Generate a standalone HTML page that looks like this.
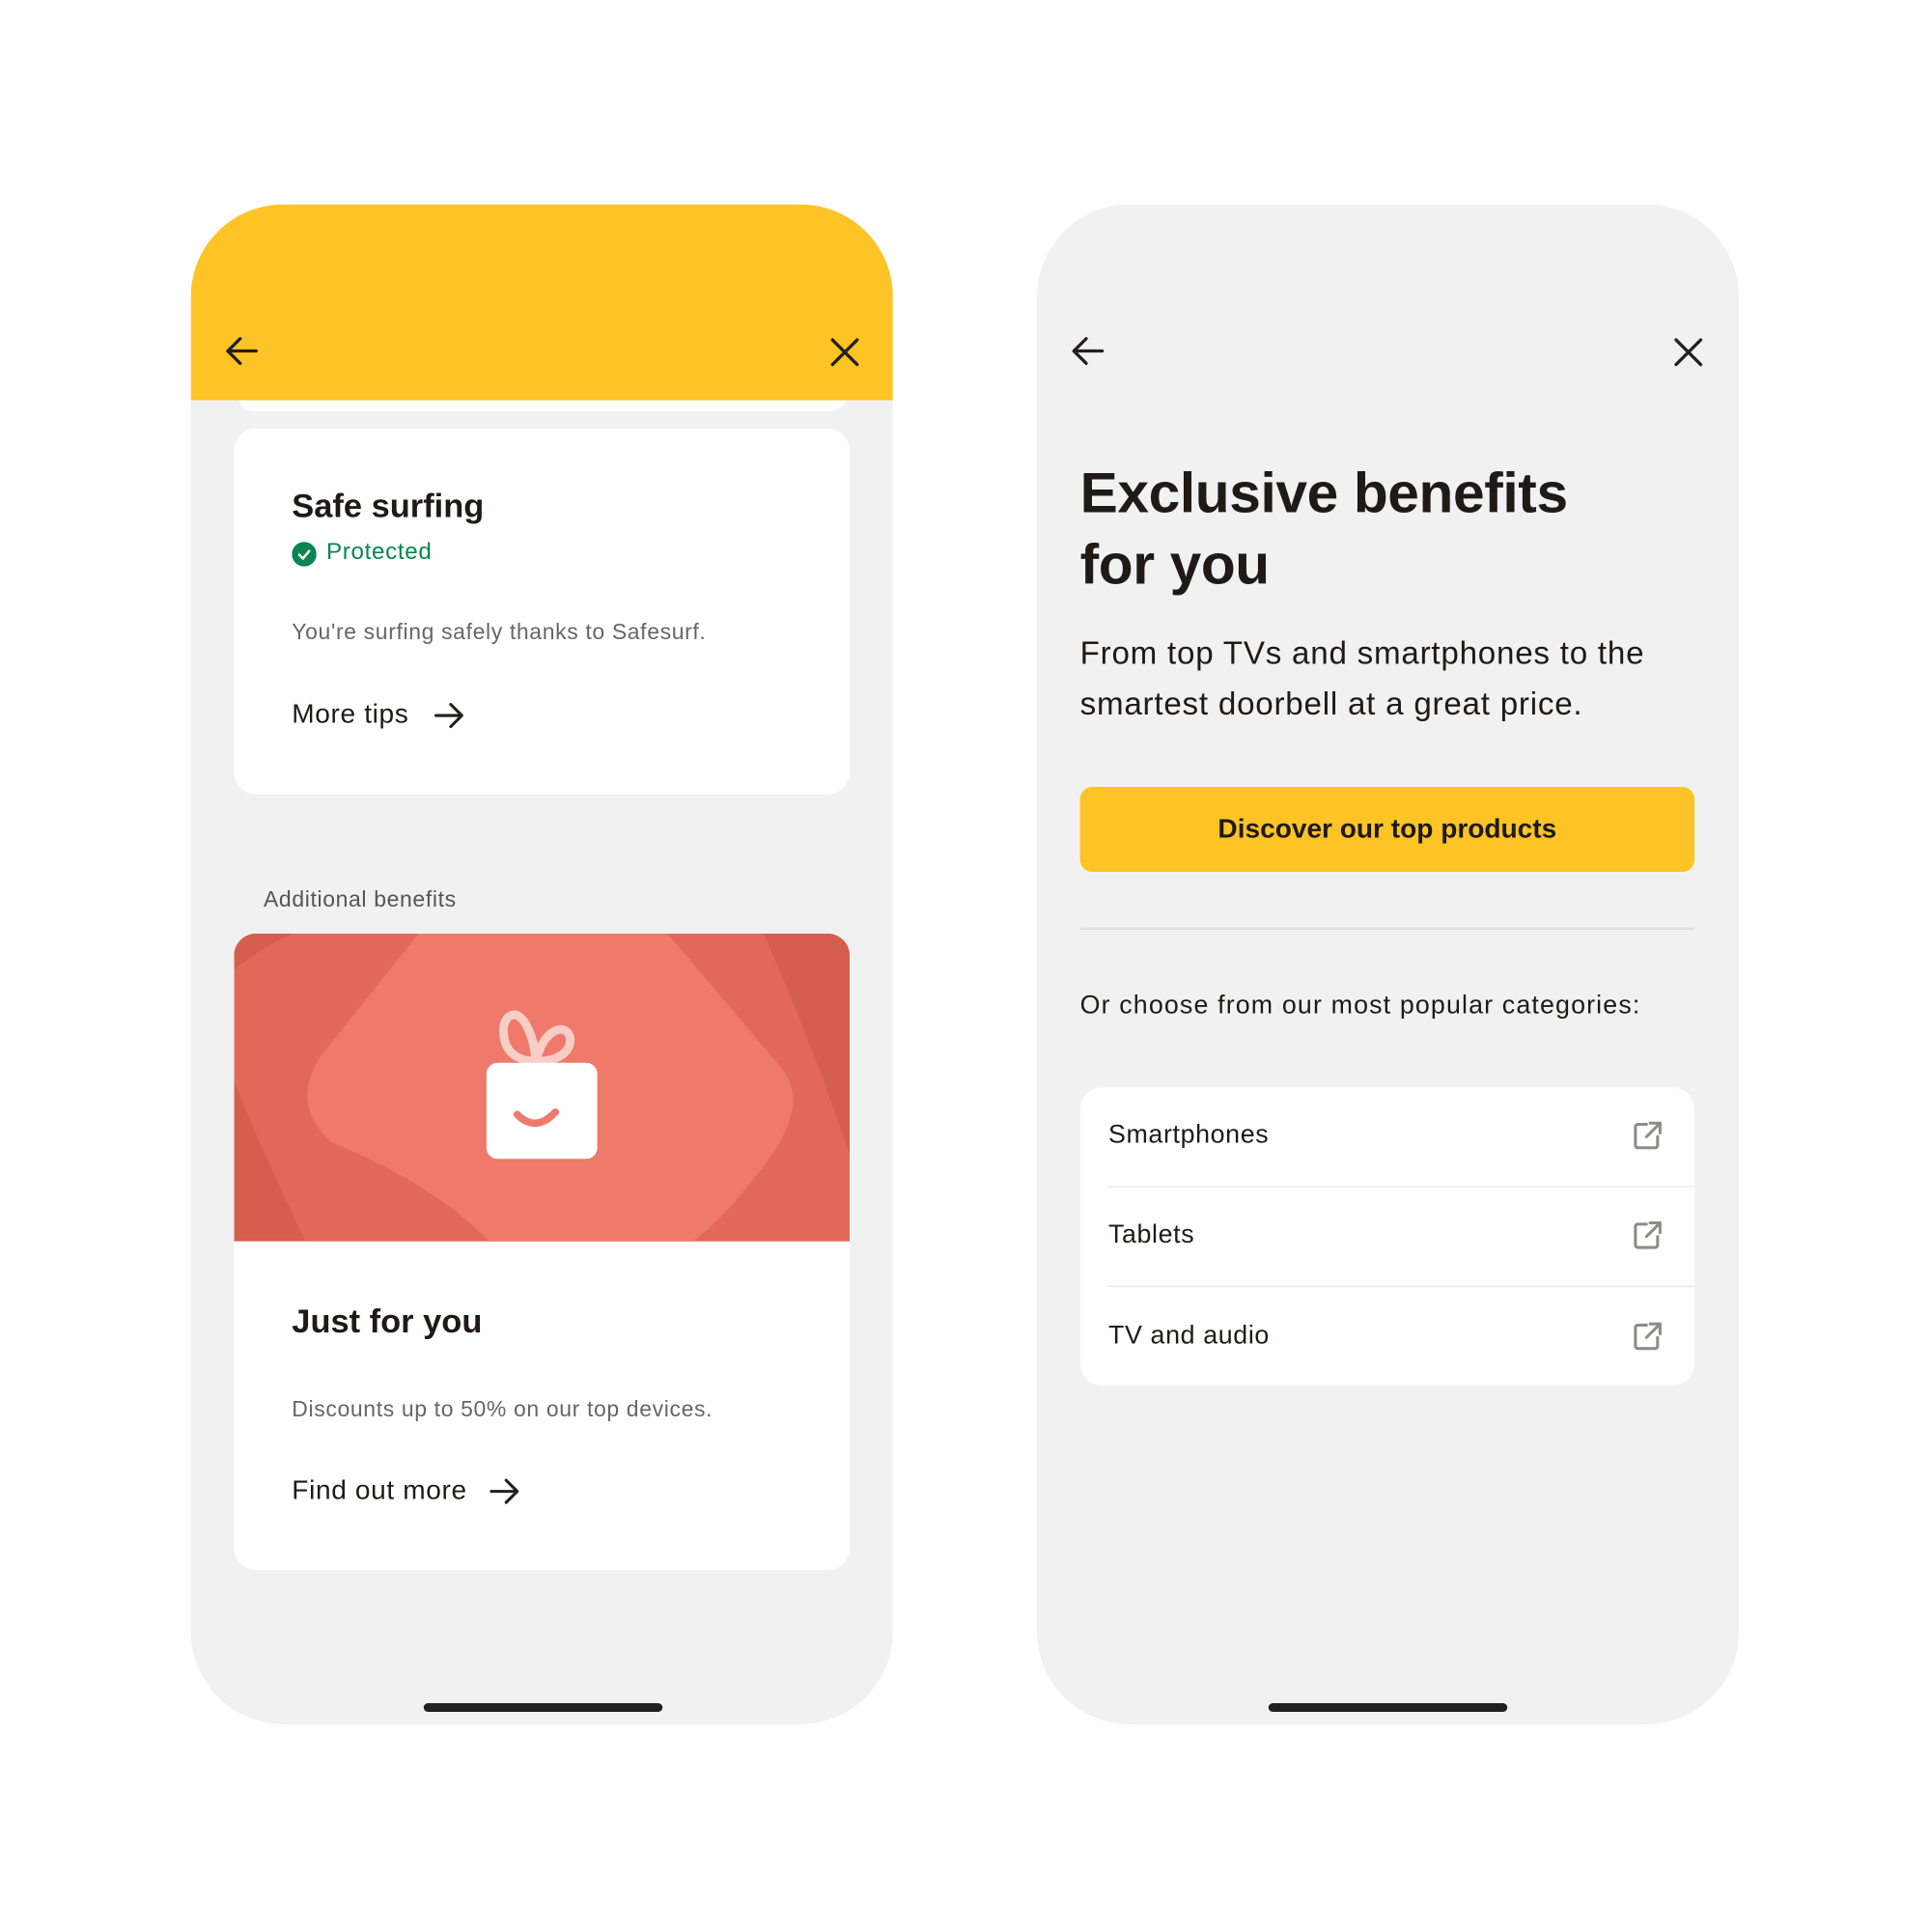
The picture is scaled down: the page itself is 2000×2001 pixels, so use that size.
<!DOCTYPE html>
<html><head><meta charset="utf-8"><style>
html,body{margin:0;padding:0;background:#fff;}
body{width:2000px;height:2001px;overflow:hidden;font-family:"Liberation Sans",sans-serif;color:#1f1a17;}
#s{position:absolute;left:0;top:0;width:1568px;height:1569px;transform:scale(1.2755);transform-origin:0 0;}
.abs{position:absolute;}
.phone{position:absolute;top:166px;width:570px;height:1234px;background:#f1f1f1;border-radius:75px;overflow:hidden;}
.card{position:absolute;background:#fff;border-radius:18px;}
.t{position:absolute;white-space:nowrap;line-height:1;letter-spacing:0.5px;}
.home{position:absolute;width:194px;height:7px;border-radius:4px;background:#231f1d;}
</style></head><body><div id="s">

<!-- Phone 1 -->
<div class="phone" style="left:155px;">
  <div class="abs" style="left:38px;top:150px;width:495px;height:18px;background:#fff;border-radius:0 0 14px 14px;"></div>
  <div class="abs" style="left:0;top:0;width:570px;height:159px;background:#fec324;"></div>
  <svg class="abs" style="left:26px;top:106px" width="30" height="26" viewBox="0 0 30 26"><path d="M27 13H4M14 3 4 13l10 10" fill="none" stroke="#231f1d" stroke-width="2.6" stroke-linecap="round" stroke-linejoin="round"/></svg>
  <svg class="abs" style="left:518px;top:107px" width="26" height="26" viewBox="0 0 26 26"><path d="M3 3l20 20M23 3 3 23" fill="none" stroke="#231f1d" stroke-width="2.6" stroke-linecap="round"/></svg>

  <div class="card" style="left:35px;top:182px;width:500px;height:297px;">
    <div class="t" style="left:47px;top:50px;font-size:27px;font-weight:bold;letter-spacing:0;">Safe surfing</div>
    <svg class="abs" style="left:47px;top:92px" width="20" height="20" viewBox="0 0 20 20"><circle cx="10" cy="10" r="10" fill="#0a8552"/><path d="M6 10.5l3 3 5-6" fill="none" stroke="#fff" stroke-width="2" stroke-linecap="round" stroke-linejoin="round"/></svg>
    <div class="t" style="left:75px;top:91px;font-size:19px;color:#0a8552;">Protected</div>
    <div class="t" style="left:47px;top:156px;font-size:18px;color:#666;">You're surfing safely thanks to Safesurf.</div>
    <div class="t" style="left:47px;top:221px;font-size:22px;">More tips</div>
    <svg class="abs" style="left:162px;top:221px" width="26" height="24" viewBox="0 0 26 24"><path d="M2 12h21M14 3l9 9-9 9" fill="none" stroke="#231f1d" stroke-width="2.4" stroke-linecap="round" stroke-linejoin="round"/></svg>
  </div>

  <div class="t" style="left:59px;top:555px;font-size:18px;color:#555;">Additional benefits</div>

  <div class="card" style="left:35px;top:592px;width:500px;height:517px;overflow:hidden;">
    <svg class="abs" style="left:0;top:0" width="500" height="250" viewBox="0 0 500 250">
      <rect width="500" height="250" fill="#d65e4e"/>
      <path d="M48 0H430Q470 90 500 180V250H58Q20 170 0 120V30Q20 12 48 0Z" fill="#e2695a"/>
      <path d="M150 0H352Q420 80 445 110Q465 135 440 175Q405 225 373 250H207Q165 205 80 170Q45 140 70 100Q110 50 150 0Z" fill="#ef796b"/>
      <path d="M245 104C228 103 220 95 219 82C218 72 222 66 228 66C236 67 244 84 245 104M245 104C248 92 254 80 264 78C271 77 275 84 272 92C268 100 258 104 245 104" fill="none" stroke="#f8cdc6" stroke-width="7" stroke-linecap="round"/>
      <rect x="205" y="105" width="90" height="78" rx="9" fill="#fff"/>
      <path d="M230 147Q245 162 261 145" fill="none" stroke="#ef796b" stroke-width="6" stroke-linecap="round"/>
    </svg>
    <div class="t" style="left:47px;top:302px;font-size:27px;font-weight:bold;letter-spacing:0;">Just for you</div>
    <div class="t" style="left:47px;top:377px;font-size:18px;color:#666;">Discounts up to 50% on our top devices.</div>
    <div class="t" style="left:47px;top:441px;font-size:22px;">Find out more</div>
    <svg class="abs" style="left:207px;top:441px" width="26" height="24" viewBox="0 0 26 24"><path d="M2 12h21M14 3l9 9-9 9" fill="none" stroke="#231f1d" stroke-width="2.4" stroke-linecap="round" stroke-linejoin="round"/></svg>
  </div>
  <div class="home" style="left:189px;top:1217px;"></div>
</div>

<!-- Phone 2 -->
<div class="phone" style="left:842px;">
  <svg class="abs" style="left:26px;top:106px" width="30" height="26" viewBox="0 0 30 26"><path d="M27 13H4M14 3 4 13l10 10" fill="none" stroke="#231f1d" stroke-width="2.6" stroke-linecap="round" stroke-linejoin="round"/></svg>
  <svg class="abs" style="left:516px;top:107px" width="26" height="26" viewBox="0 0 26 26"><path d="M3 3l20 20M23 3 3 23" fill="none" stroke="#231f1d" stroke-width="2.6" stroke-linecap="round"/></svg>
  <div class="t" style="left:35px;top:205px;font-size:46px;font-weight:bold;line-height:58px;letter-spacing:-0.3px;">Exclusive benefits<br>for you</div>
  <div class="t" style="left:35px;top:344px;font-size:26px;line-height:41px;letter-spacing:0.6px;">From top TVs and smartphones to the<br>smartest doorbell at a great price.</div>
  <div class="abs" style="left:35px;top:473px;width:499px;height:69px;background:#fec324;border-radius:10px;text-align:center;line-height:67px;font-size:22px;font-weight:bold;">Discover our top products</div>
  <div class="abs" style="left:35px;top:587px;width:499px;height:2px;background:#e2e2e2;"></div>
  <div class="t" style="left:35px;top:640px;font-size:21px;letter-spacing:0.9px;">Or choose from our most popular categories:</div>
  <div class="card" style="left:35px;top:717px;width:499px;height:242px;">
    <div class="t" style="left:23px;top:28px;font-size:21px;">Smartphones</div>
    <div class="t" style="left:23px;top:109px;font-size:21px;">Tablets</div>
    <div class="t" style="left:23px;top:191px;font-size:21px;">TV and audio</div>
    <div class="abs" style="left:23px;top:80px;width:476px;height:1px;background:#e6e6e6;"></div>
    <div class="abs" style="left:23px;top:161px;width:476px;height:1px;background:#e6e6e6;"></div>
    <svg class="abs" style="left:448px;top:26px" width="26" height="26" viewBox="0 0 26 26"><path d="M12 4H5a2 2 0 0 0-2 2v15a2 2 0 0 0 2 2h14a2 2 0 0 0 2-2v-7M15 3h8v8M23 3 12 14" fill="none" stroke="#8f8b89" stroke-width="2.4" stroke-linecap="round" stroke-linejoin="round"/></svg>
    <svg class="abs" style="left:448px;top:107px" width="26" height="26" viewBox="0 0 26 26"><path d="M12 4H5a2 2 0 0 0-2 2v15a2 2 0 0 0 2 2h14a2 2 0 0 0 2-2v-7M15 3h8v8M23 3 12 14" fill="none" stroke="#8f8b89" stroke-width="2.4" stroke-linecap="round" stroke-linejoin="round"/></svg>
    <svg class="abs" style="left:448px;top:189px" width="26" height="26" viewBox="0 0 26 26"><path d="M12 4H5a2 2 0 0 0-2 2v15a2 2 0 0 0 2 2h14a2 2 0 0 0 2-2v-7M15 3h8v8M23 3 12 14" fill="none" stroke="#8f8b89" stroke-width="2.4" stroke-linecap="round" stroke-linejoin="round"/></svg>
  </div>
  <div class="home" style="left:188px;top:1217px;"></div>
</div>

</div></body></html>
